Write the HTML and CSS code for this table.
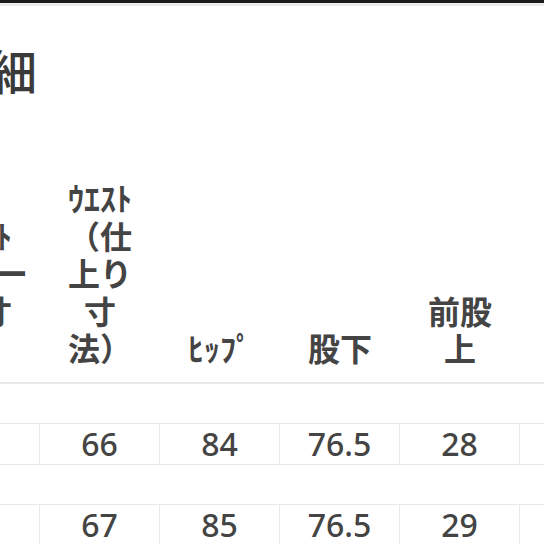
FILE: index.html
```html
<!DOCTYPE html>
<html lang="ja">
<head>
<meta charset="utf-8">
<link rel="stylesheet" href="styles.css">
</head>
<body>
<div class="topbar"></div>
<div class="page">
  <h1 class="title">詳細</h1>
  <div class="table">
    <div class="row head">
      <div class="hcell">ｳｴｽﾄ<br>（ヌー<br>ド寸<br>法）</div>
      <div class="hcell">ｳｴｽﾄ<br>（仕<br>上り<br>寸<br>法）</div>
      <div class="hcell">ﾋｯﾌﾟ</div>
      <div class="hcell">股下</div>
      <div class="hcell">前股<br>上</div>
      <div class="hcell">わた<br>り幅</div>
    </div>
    <div class="row data">
      <div class="dcell">63</div>
      <div class="dcell">66</div>
      <div class="dcell">84</div>
      <div class="dcell">76.5</div>
      <div class="dcell">28</div>
      <div class="dcell"></div>
    </div>
    <div class="row data">
      <div class="dcell">61</div>
      <div class="dcell">67</div>
      <div class="dcell">85</div>
      <div class="dcell">76.5</div>
      <div class="dcell">29</div>
      <div class="dcell"></div>
    </div>
  </div>
</div>
</body>
</html>
```
FILE: styles.css
```css
html, body {
  margin: 0;
  padding: 0;
  background: #fff;
  overflow: hidden;
}
body {
  width: 544px;
  height: 544px;
  font-family: "Noto Sans CJK JP", "Noto Sans", sans-serif;
  color: #444;
}
.topbar {
  height: 3px;
  background: #1c1c1c;
  border-bottom: 3px solid #ececec;
}
.page {
  margin-left: -80px;
}
.title {
  margin: 39px 0 0 21px;
  font-size: 48px;
  line-height: 48px;
  font-weight: 500;
  color: #3a3a3a;
}
.table {
  margin-top: 86px;
}
.row {
  display: grid;
  grid-template-columns: repeat(6, 120px);
  width: 720px;
}
.head {
  align-items: end;
  padding-bottom: 15px;
  border-bottom: 2px solid #e8e8e8;
}
.hcell {
  text-align: center;
  font-size: 32px;
  line-height: 37.5px;
  font-weight: 700;
  color: #444;
}
.data {
  margin-top: 39px;
}
.dcell {
  height: 40px;
  border-top: 1px solid #e9e9e9;
  border-bottom: 1px solid #e9e9e9;
  border-right: 1px solid #e9e9e9;
  display: flex;
  align-items: center;
  justify-content: center;
  font-family: "Noto Sans", sans-serif;
  font-size: 32px;
  font-weight: 500;
  color: #444;
}
```
